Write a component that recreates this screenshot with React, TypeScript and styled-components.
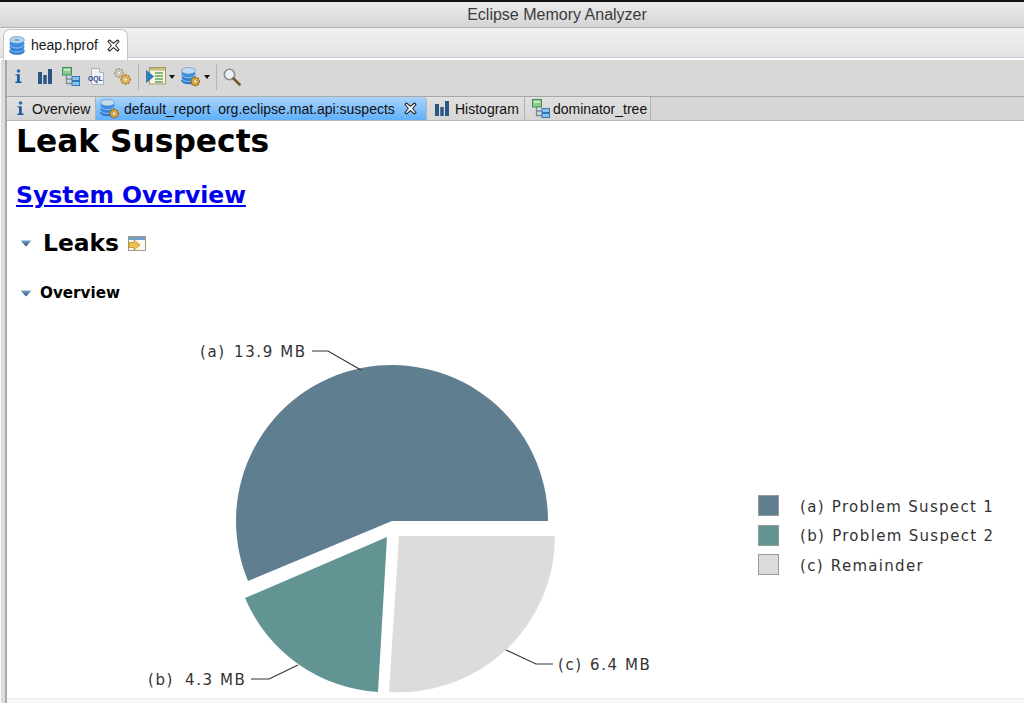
import styled, { createGlobalStyle } from "styled-components";

const GlobalStyle = createGlobalStyle`
  html, body {
    margin: 0;
    padding: 0;
    background: #fff;
  }
  * {
    box-sizing: border-box;
  }
`;

const UI_FONT = `"Liberation Sans", Arial, sans-serif`;
const DOC_FONT = `"DejaVu Sans", Verdana, sans-serif`;

function DbIcon() {
  return (
    <svg width="16" height="19" viewBox="0 0 16 19">
      <ellipse cx="8" cy="15" rx="7.5" ry="3.6" fill="#2b7bd0" stroke="#1f66b4" strokeWidth="0.5" />
      <path d="M0.8 13.4a7.5 3.6 0 0 0 14.4 0" fill="none" stroke="#a6d0f2" strokeWidth="0.9" />
      <ellipse cx="8" cy="11" rx="7.5" ry="3.6" fill="#2f83d8" />
      <path d="M0.8 9.4a7.5 3.6 0 0 0 14.4 0" fill="none" stroke="#a6d0f2" strokeWidth="0.9" />
      <ellipse cx="8" cy="7.4" rx="7.5" ry="3.6" fill="#3d8fdf" />
      <ellipse cx="8" cy="4" rx="7.5" ry="3.5" fill="#b4d3ec" stroke="#4f86bb" strokeWidth="0.6" />
      <ellipse cx="8" cy="4" rx="2.6" ry="1.1" fill="#6f9fc9" />
    </svg>
  );
}

function InfoIcon() {
  return (
    <svg width="7" height="15" viewBox="0 0 7 15">
      <circle cx="3.5" cy="2" r="1.8" fill="#1f6fb5" />
      <path d="M.6 5.2h4.2v7.4H6.6V14H.4v-1.4h1.6V6.6H.6z" fill="#1f5f9e" />
    </svg>
  );
}

function BarsIcon() {
  return (
    <svg width="14" height="15" viewBox="0 0 14 15">
      <rect x="0" y="3" width="4" height="12" fill="#2a5685" />
      <rect x="5.3" y="6" width="3.4" height="9" fill="#2a5685" />
      <rect x="10" y="0" width="4" height="15" fill="#2a5685" />
    </svg>
  );
}

function TreeIcon() {
  return (
    <svg width="18" height="19" viewBox="0 0 18 19">
      <path d="M4.5 8v8.5H10M4.5 12H10" fill="none" stroke="#7b8a99" strokeWidth="1.3" />
      <rect x="0.5" y="0.5" width="9" height="7.5" fill="#8ccb8a" stroke="#3f8f58" />
      <rect x="2" y="2" width="6" height="2" fill="#c6e8c2" />
      <rect x="10" y="9.5" width="7.5" height="4" fill="#8fc1ea" stroke="#2f77bb" />
      <rect x="10" y="14.5" width="7.5" height="4" fill="#8fc1ea" stroke="#2f77bb" />
    </svg>
  );
}

function OqlIcon() {
  return (
    <svg width="16" height="17" viewBox="0 0 16 17">
      <path d="M3.5.5h8l4 4v12h-12z" fill="#f3f3f6" stroke="#aab0bd" />
      <path d="M11.5.5v4h4" fill="#dfe3ea" stroke="#aab0bd" />
      <text x="0" y="12.5" fontFamily={UI_FONT} fontSize="6.8" fontWeight="700" fill="#31418f">
        OQL
      </text>
    </svg>
  );
}

function GearShape({ cx, cy, r, fill, stroke }: { cx: number; cy: number; r: number; fill: string; stroke: string }) {
  const teeth = [0, 45, 90, 135];
  return (
    <g>
      {teeth.map((a) => (
        <rect
          key={a}
          x={cx - r * 1.25}
          y={cy - r * 0.28}
          width={r * 2.5}
          height={r * 0.56}
          fill={stroke}
          transform={`rotate(${a} ${cx} ${cy})`}
        />
      ))}
      <circle cx={cx} cy={cy} r={r} fill={fill} stroke={stroke} strokeWidth="0.7" />
      <circle cx={cx} cy={cy} r={r * 0.42} fill="#f4efe2" stroke={stroke} strokeWidth="0.5" />
    </g>
  );
}

function GearsIcon() {
  return (
    <svg width="19" height="19" viewBox="0 0 19 19">
      <GearShape cx={6} cy={6} r={3.9} fill="#d5cfc2" stroke="#a59c8c" />
      <GearShape cx={12.5} cy={12.5} r={4.2} fill="#e6bb57" stroke="#a9822f" />
    </svg>
  );
}

function RunReportIcon() {
  return (
    <svg width="20" height="19" viewBox="0 0 20 19">
      <rect x="3.5" y="0.5" width="16" height="16.5" fill="#f7f3dc" stroke="#a39a62" />
      <rect x="4" y="1" width="15" height="2.6" fill="#c7bf86" />
      <path d="M9 6h8M9 9h8M9 12h8M9 15h8" stroke="#5aa46a" strokeWidth="1.3" />
      <path d="M0.5 3.5l7 6-7 6z" fill="#2b7fc2" stroke="#1d5a8e" strokeWidth="0.6" />
    </svg>
  );
}

function DbGearIcon() {
  return (
    <svg width="20" height="20" viewBox="0 0 20 20">
      <ellipse cx="7.5" cy="13.5" rx="7" ry="3.4" fill="#2b7bd0" stroke="#1f66b4" strokeWidth="0.5" />
      <path d="M0.8 12a7 3.4 0 0 0 13.4 0" fill="none" stroke="#a6d0f2" strokeWidth="0.9" />
      <ellipse cx="7.5" cy="9.8" rx="7" ry="3.4" fill="#2f83d8" />
      <path d="M0.8 8.2a7 3.4 0 0 0 13.4 0" fill="none" stroke="#a6d0f2" strokeWidth="0.9" />
      <ellipse cx="7.5" cy="6.4" rx="7" ry="3.4" fill="#3d8fdf" />
      <ellipse cx="7.5" cy="3.7" rx="7" ry="3.2" fill="#c4dcf0" stroke="#4f86bb" strokeWidth="0.6" />
      <GearShape cx={14.2} cy={14.5} r={3.9} fill="#e6ad3e" stroke="#8f6b25" />
    </svg>
  );
}

function SearchIcon() {
  return (
    <svg width="18" height="18" viewBox="0 0 18 18">
      <circle cx="6.5" cy="6.5" r="5.2" fill="#eef1f3" stroke="#8b8f90" strokeWidth="1.6" />
      <path d="M10.5 10.5l6 6" stroke="#7a5a2c" strokeWidth="2.6" strokeLinecap="round" />
    </svg>
  );
}

function CloseIcon() {
  return (
    <svg width="13" height="13" viewBox="0 0 13 13">
      <path
        d="M1 2.5L2.5 1 6.5 4.4 10.5 1 12 2.5 8.6 6.5 12 10.5 10.5 12 6.5 8.6 2.5 12 1 10.5 4.4 6.5z"
        fill="#fdfdfd"
        stroke="#2a2a2a"
        strokeWidth="1.1"
        strokeLinejoin="round"
      />
    </svg>
  );
}

function Twistie() {
  return (
    <svg width="12" height="7" viewBox="0 0 12 7">
      <defs>
        <linearGradient id="twist" x1="0" y1="0" x2="0" y2="1">
          <stop offset="0" stopColor="#7ba6c9" />
          <stop offset="1" stopColor="#1a4679" />
        </linearGradient>
      </defs>
      <path d="M0.5 0.5h11L6 6.5z" fill="url(#twist)" />
    </svg>
  );
}

function ExportIcon() {
  return (
    <svg width="18" height="15" viewBox="0 0 18 15">
      <rect x="0.5" y="0.5" width="17" height="14" fill="#fbf8ee" stroke="#a19a80" />
      <rect x="1" y="1" width="16" height="3" fill="#6fa0cc" />
      <path d="M1 6.5h5V4l6 5-6 5v-2.5H1z" fill="#eec04f" stroke="#b88a25" strokeWidth="0.7" />
    </svg>
  );
}

function PieChart() {
  return (
    <PieSvg width="560" height="361" viewBox="140 340 560 361">
      <path d="M392 521H548A156 156 0 1 0 248 581Z" fill="#5f7f91" />
      <path d="M387 537L245 598A154.5 154.5 0 0 0 378 692Z" fill="#629494" />
      <path d="M399 536H555A156 156 0 0 1 389 692Z" fill="#dcdcdc" />
      <g fill="none" stroke="#333" strokeWidth="1.1">
        <path d="M312 351H328L361 370" />
        <path d="M251 679H269L298 665" />
        <path d="M506 650L536 664H553" />
      </g>
      <ChartLabel x="200" y="357">(a)</ChartLabel>
      <ChartLabel x="234" y="357">13.9 MB</ChartLabel>
      <ChartLabel x="148" y="685">(b)</ChartLabel>
      <ChartLabel x="185" y="685">4.3 MB</ChartLabel>
      <ChartLabel x="558" y="670">(c)</ChartLabel>
      <ChartLabel x="590" y="670">6.4 MB</ChartLabel>
    </PieSvg>
  );
}

export default function App() {
  return (
    <>
      <GlobalStyle />
      <Page>
        <TitleBar>Eclipse Memory Analyzer</TitleBar>
        <EditorTabs>
          <EditorTab>
            <DbIcon />
            <span>heap.hprof</span>
            <CloseIcon />
          </EditorTab>
        </EditorTabs>
        <Frame>
          <FrameInner>
            <Toolbar>
              <ToolSlot $w={23}>
                <InfoIcon />
              </ToolSlot>
              <ToolSlot $w={24}>
                <BarsIcon />
              </ToolSlot>
              <ToolSlot $w={26}>
                <TreeIcon />
              </ToolSlot>
              <ToolSlot $w={25}>
                <OqlIcon />
              </ToolSlot>
              <ToolSlot $w={25}>
                <GearsIcon />
              </ToolSlot>
              <ToolSep />
              <ToolSlot $w={23}>
                <RunReportIcon />
              </ToolSlot>
              <DropArrow />
              <ToolSlot $w={23}>
                <DbGearIcon />
              </ToolSlot>
              <DropArrow />
              <ToolSep />
              <ToolSlot $w={18}>
                <SearchIcon />
              </ToolSlot>
            </Toolbar>
            <PaneTabs>
              <PaneTab $w={89} $pad={10} $gap={8}>
                <InfoIcon />
                <span>Overview</span>
              </PaneTab>
              <PaneTab $w={331} $pad={4} $gap={4} $active>
                <DbGearIcon />
                <span>{"default_report\u00a0\u00a0org.eclipse.mat.api:suspects"}</span>
                <CloseIcon />
              </PaneTab>
              <PaneTab $w={98} $pad={8} $gap={6}>
                <BarsIcon />
                <span>Histogram</span>
              </PaneTab>
              <PaneTab $w={126} $pad={7} $gap={3}>
                <TreeIcon />
                <span>dominator_tree</span>
              </PaneTab>
            </PaneTabs>
            <Report>
              <ReportTitle>Leak Suspects</ReportTitle>
              <ReportLink href="#">System Overview</ReportLink>
              <SectionHead>
                <Twistie />
                <SectionTitle>Leaks</SectionTitle>
                <ExportIcon />
              </SectionHead>
              <SubHead>
                <Twistie />
                <SubTitle>Overview</SubTitle>
              </SubHead>
              <ChartRow>
                <PieChart />
                <Legend>
                  <LegendRow>
                    <Swatch $c="#5f7f91" />
                    <LegendKey>(a)</LegendKey>
                    <LegendText>Problem Suspect 1</LegendText>
                  </LegendRow>
                  <LegendRow>
                    <Swatch $c="#629494" />
                    <LegendKey>(b)</LegendKey>
                    <LegendText>Problem Suspect 2</LegendText>
                  </LegendRow>
                  <LegendRow>
                    <Swatch $c="#dcdcdc" />
                    <LegendKey>(c)</LegendKey>
                    <LegendText>Remainder</LegendText>
                  </LegendRow>
                </Legend>
              </ChartRow>
            </Report>
          </FrameInner>
        </Frame>
      </Page>
    </>
  );
}

const Page = styled.div`
  width: 1024px;
  height: 703px;
  overflow: hidden;
  display: flex;
  flex-direction: column;
  background: #f8f8f8;
  font-family: ${UI_FONT};
`;

const TitleBar = styled.div`
  height: 28px;
  flex: none;
  display: flex;
  align-items: center;
  justify-content: center;
  padding: 1px 0 0 90px;
  border-top: 2px solid #111;
  border-bottom: 1px solid #b4b4b4;
  background: linear-gradient(#ebebeb, #d5d5d5);
  color: #3c3c3c;
  font-size: 16px;
`;

const EditorTabs = styled.div`
  height: 32px;
  flex: none;
  display: flex;
  align-items: flex-end;
  padding-left: 3px;
  background: linear-gradient(#f1f1f1, #e2e2e2);
  border-bottom: 2px solid #fff;
  box-shadow: inset 0 -1px 0 #c5c8d8;
`;

const EditorTab = styled.div`
  width: 125px;
  height: 31px;
  margin-bottom: -2px;
  display: flex;
  align-items: center;
  gap: 6px;
  padding: 0 0 0 5px;
  background: #fff;
  border: 1px solid #c6c6c6;
  border-bottom: none;
  border-radius: 7px 7px 0 0;
  color: #1a1a1a;
  font-size: 14px;
  position: relative;
  z-index: 1;
  svg + span + svg {
    margin-left: 3px;
  }
`;

const Frame = styled.div`
  flex: 1;
  min-height: 0;
  display: flex;
  margin-left: 1px;
  border-left: 4px solid #dcdcdc;
`;

const FrameInner = styled.div`
  flex: 1;
  min-width: 0;
  display: flex;
  flex-direction: column;
  border-left: 2px solid #a8a8a8;
`;

const Toolbar = styled.div`
  height: 36px;
  flex: none;
  display: flex;
  align-items: center;
  padding: 0 0 3px 8px;
  background: #d8d8d8;
`;

const ToolSlot = styled.div<{ $w: number }>`
  width: ${(p) => p.$w}px;
  flex: none;
  display: flex;
  align-items: center;
`;

const ToolSep = styled.div`
  width: 1px;
  height: 26px;
  flex: none;
  margin-right: 6.5px;
  background: #b5b5b5;
`;

const DropArrow = styled.div`
  width: 0;
  height: 0;
  flex: none;
  margin-right: 6px;
  border-left: 3px solid transparent;
  border-right: 3px solid transparent;
  border-top: 4px solid #111;
`;

const PaneTabs = styled.div`
  height: 25px;
  flex: none;
  display: flex;
  border-top: 1px solid #a8a8a8;
  border-bottom: 1px solid #b8b8b8;
  background: #d6d6d6;
`;

const PaneTab = styled.div<{ $w: number; $pad: number; $gap: number; $active?: boolean }>`
  width: ${(p) => p.$w}px;
  flex: none;
  display: flex;
  align-items: center;
  gap: ${(p) => p.$gap}px;
  padding: 0 9px 0 ${(p) => p.$pad}px;
  white-space: pre;
  font-size: 14px;
  color: #111;
  border-right: 1px solid #b2b2b2;
  border-radius: ${(p) => (p.$active ? "5px 5px 0 0" : "0")};
  background: ${(p) => (p.$active ? "linear-gradient(#abd3fb, #5fb0fb)" : "linear-gradient(#e0e0e0, #d6d6d6)")};
  svg {
    flex: none;
  }
  span {
    padding-top: 1px;
  }
  svg + span + svg {
    margin-left: auto;
  }
`;

const Report = styled.div`
  flex: 1;
  min-height: 0;
  display: flex;
  flex-direction: column;
  align-items: flex-start;
  padding-left: 10px;
  margin-bottom: 4px;
  border-bottom: 1px solid #e8e8e8;
  background: #fff;
  color: #000;
  font-family: ${DOC_FONT};
  font-weight: 700;
`;

const ReportTitle = styled.h1`
  margin: 1px 0 0 -1px;
  font-size: 31.3px;
  line-height: 38px;
  font-weight: 700;
`;

const ReportLink = styled.a`
  margin: 21px 0 0 -1px;
  color: #0000ee;
  font-size: 23.5px;
  line-height: 28px;
`;

const SectionHead = styled.div`
  display: flex;
  align-items: center;
  margin: 20px 0 0 3px;
  svg:first-child {
    margin-right: 11px;
  }
`;

const SectionTitle = styled.h2`
  margin: 0 9px 0 0;
  font-size: 23.4px;
  line-height: 28px;
  font-weight: 700;
`;

const SubHead = styled.div`
  display: flex;
  align-items: center;
  margin: 26px 0 0 3px;
  svg:first-child {
    margin-right: 8px;
  }
`;

const SubTitle = styled.h3`
  margin: 0;
  font-size: 15.2px;
  line-height: 20px;
  font-weight: 700;
`;

const ChartRow = styled.div`
  display: flex;
  align-items: flex-start;
  margin: 37px 0 0 123px;
`;

const PieSvg = styled.svg`
  display: block;
  flex: none;
`;

const ChartLabel = styled.text`
  font-family: "DejaVu Sans", Verdana, sans-serif;
  font-size: 15px;
  font-weight: 400;
  letter-spacing: 1.6px;
  fill: #333;
`;

const Legend = styled.div`
  margin: 155px 0 0 58px;
  display: flex;
  flex-direction: column;
  gap: 8.5px;
  font-weight: 400;
  font-size: 15px;
  letter-spacing: 1.3px;
  white-space: pre;
  color: #333;
`;

const LegendRow = styled.div`
  display: flex;
  align-items: center;
  height: 21px;
`;

const LegendKey = styled.span`
  margin: 0 7px 0 21px;
  padding-top: 2px;
`;

const LegendText = styled.span`
  padding-top: 2px;
`;

const Swatch = styled.div<{ $c: string }>`
  width: 21px;
  height: 21px;
  background: ${(p) => p.$c};
  border: 1px solid #9a9a9a;
`;
